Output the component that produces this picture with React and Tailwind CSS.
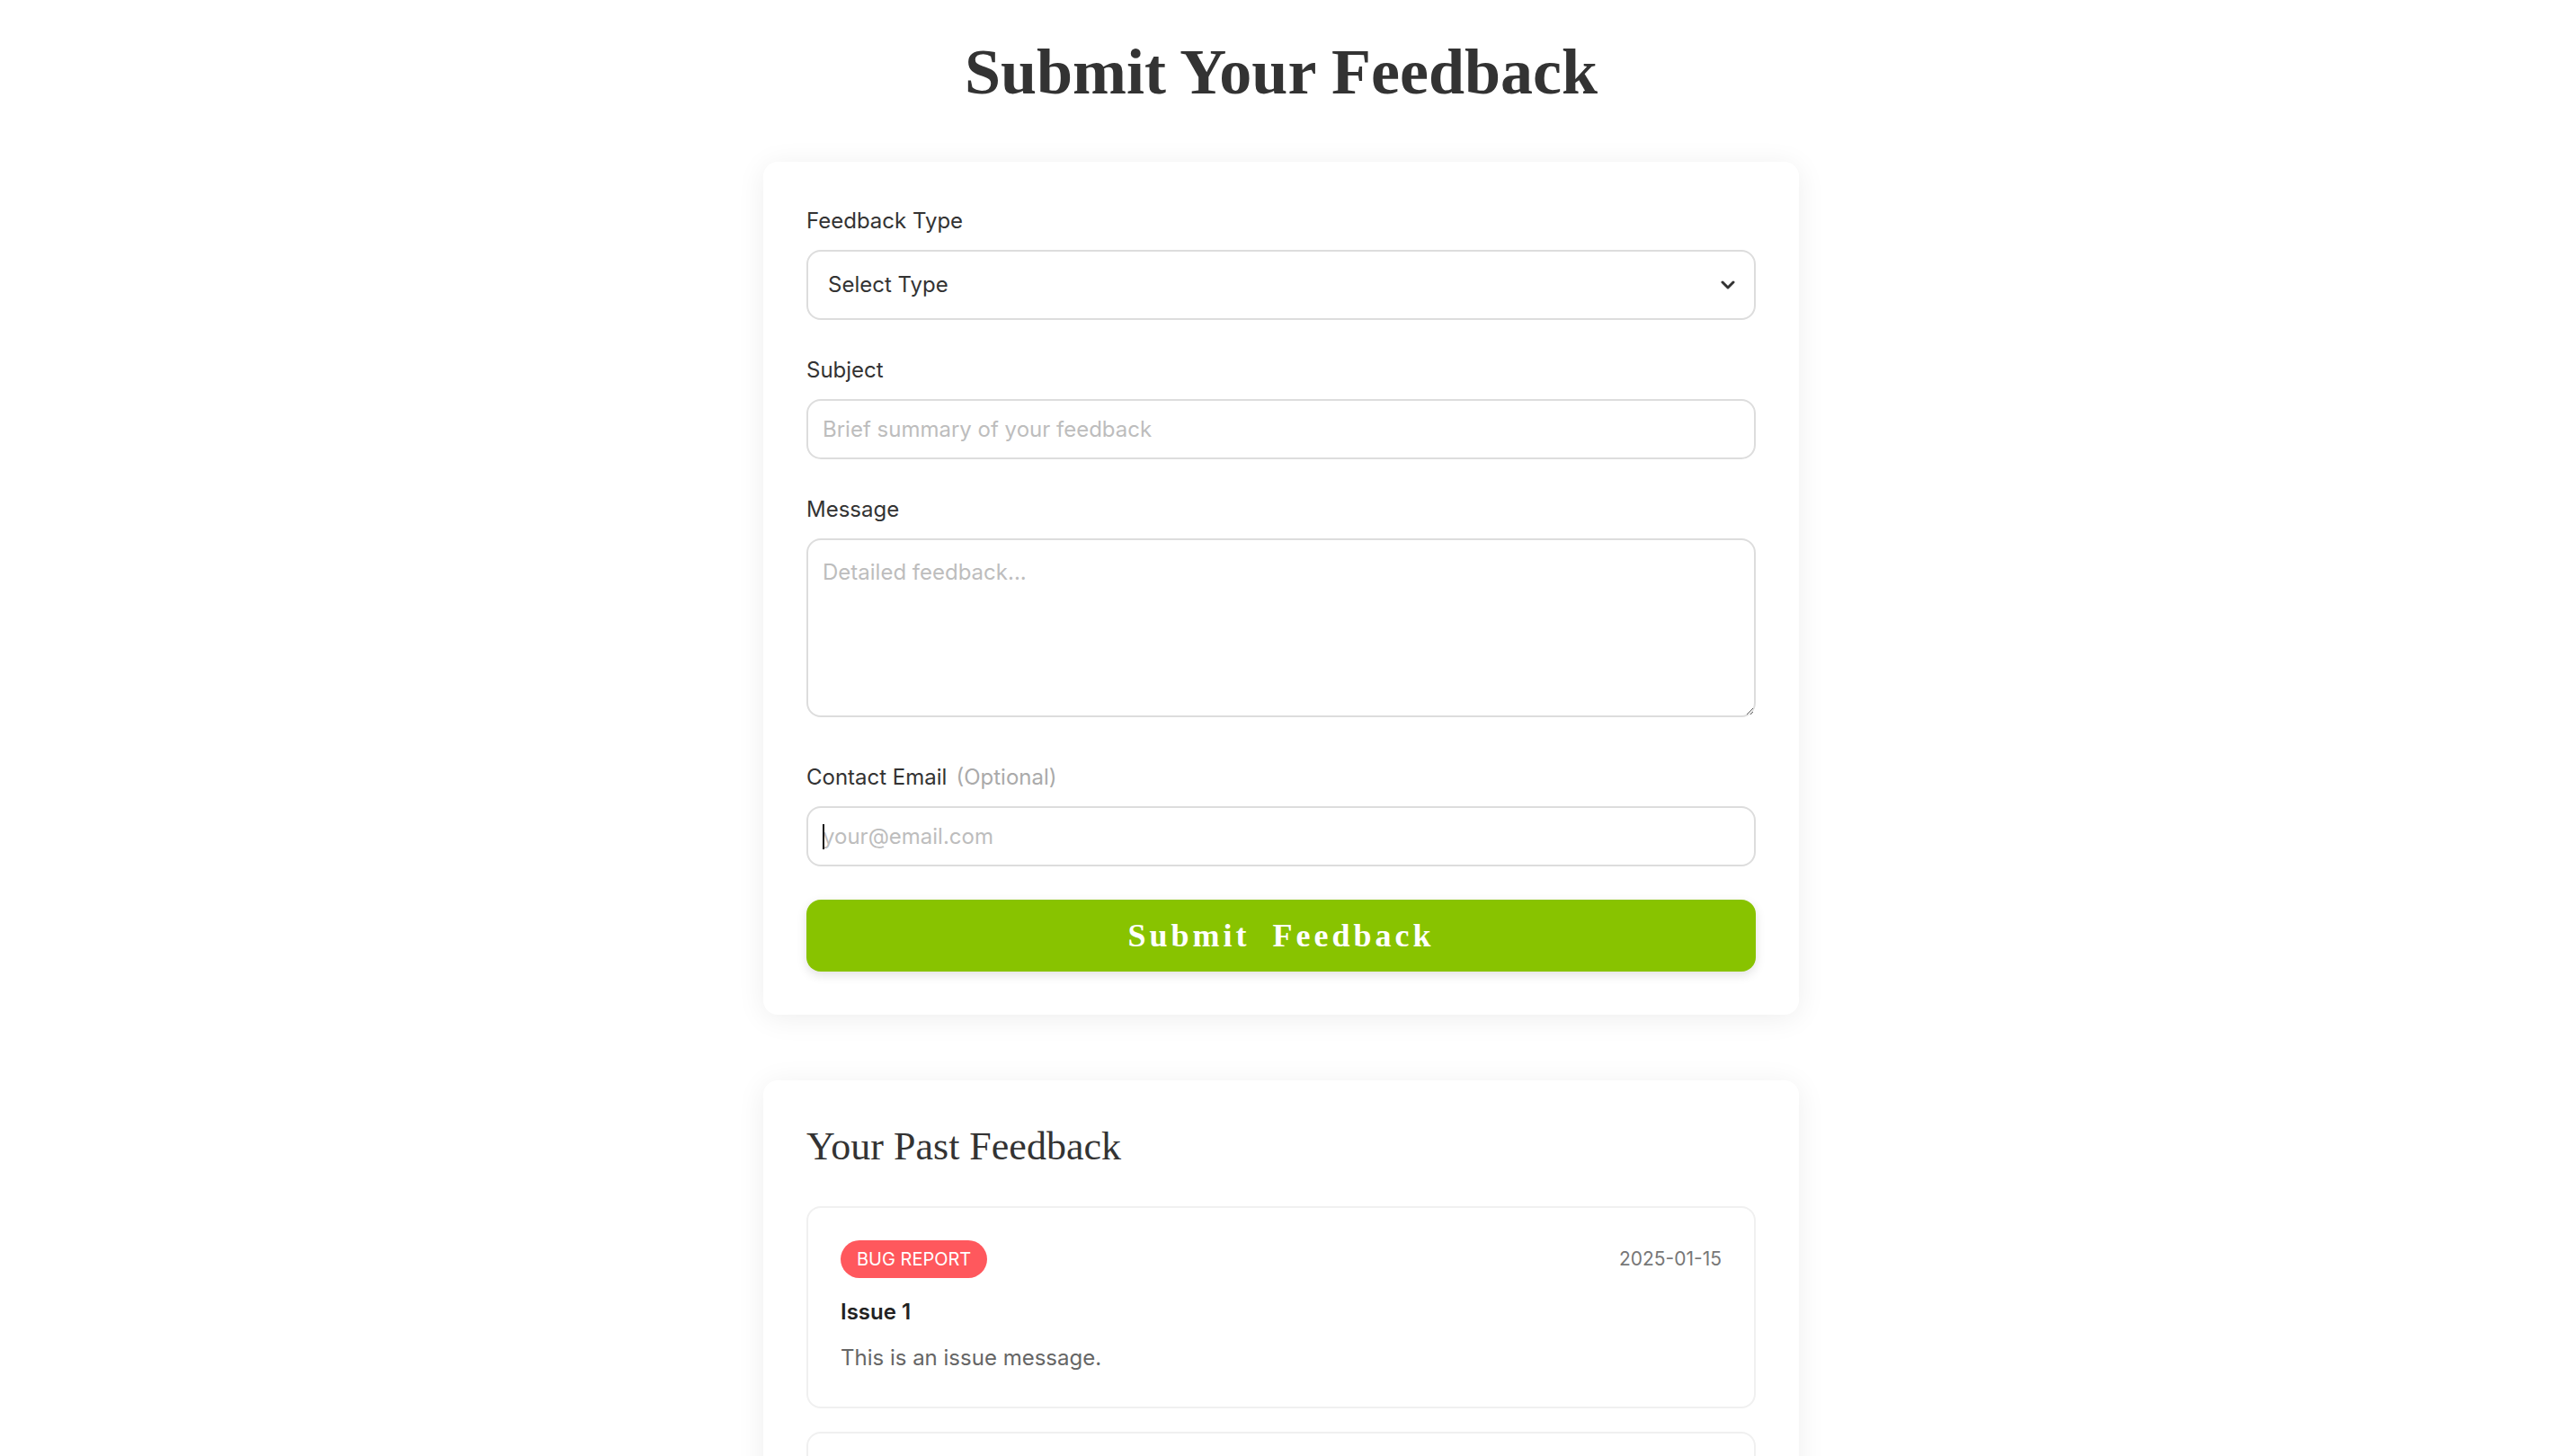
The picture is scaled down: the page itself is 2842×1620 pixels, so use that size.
import { useState } from "react";

const pastFeedback = [
  {
    id: 1,
    type: "Bug Report",
    date: "2025-01-15",
    subject: "Issue 1",
    message: "This is an issue message.",
  },
  {
    id: 2,
    type: "Suggestion",
    date: "2025-01-10",
    subject: "Idea 2",
    message: "This is a suggestion message.",
  },
];

function Field({ label, hint, children, className }) {
  return (
    <div className={className}>
      <label className="mb-[14px] block text-[24px] leading-[36px] text-[#333]">
        {label}
        {hint && <span className="ml-[10px] text-[#aaa]">{hint}</span>}
      </label>
      {children}
    </div>
  );
}

export default function App() {
  const [type, setType] = useState("");

  return (
    <div className="min-h-screen bg-white pl-2 font-['Inter',sans-serif] text-[#333]">
      <div className="mx-auto w-[1152px] pt-[37px] pb-24">
        <h1 className="mb-[57px] text-center font-['Liberation_Serif',serif] text-[72px] font-bold leading-[86px] text-[#333]">
          Submit Your Feedback
        </h1>

        {/* Form card */}
        <form
          className="rounded-2xl bg-white p-12 shadow-[0_4px_32px_rgba(0,0,0,0.07)]"
          onSubmit={(e) => e.preventDefault()}
        >
          <Field label="Feedback Type" className="mb-[38px]">
            <div className="relative">
              <select
                value={type}
                onChange={(e) => setType(e.target.value)}
                className="block h-[78px] w-full appearance-none rounded-2xl border-2 border-[#ddd] bg-white pl-[22px] text-[24px] text-[#333] outline-none"
              >
                <option value="">Select Type</option>
                <option value="bug">Bug Report</option>
                <option value="suggestion">Suggestion</option>
                <option value="other">Other</option>
              </select>
              <svg
                className="pointer-events-none absolute right-[23px] top-1/2 -translate-y-1/2"
                width="16"
                height="10"
                viewBox="0 0 16 10"
                fill="none"
              >
                <polyline
                  points="2,2 8,8 14,2"
                  stroke="#333"
                  strokeWidth="3"
                  strokeLinecap="round"
                  strokeLinejoin="round"
                />
              </svg>
            </div>
          </Field>

          <Field label="Subject" className="mb-[38px]">
            <input
              type="text"
              placeholder="Brief summary of your feedback"
              className="block h-[67px] w-full rounded-2xl border-2 border-[#ddd] px-4 text-[24px] text-[#333] outline-none placeholder:text-[#bdbdbd]"
            />
          </Field>

          <Field label="Message" className="mb-[49px]">
            <textarea
              placeholder="Detailed feedback..."
              className="block h-[199px] w-full rounded-2xl border-2 border-[#ddd] px-4 pt-[18px] text-[24px] text-[#333] outline-none placeholder:text-[#bdbdbd]"
            />
          </Field>

          <Field label="Contact Email" hint="(Optional)" className="mb-[37px]">
            <div className="relative">
              <input
                type="email"
                autoFocus
                placeholder="your@email.com"
                className="block h-[67px] w-full rounded-2xl border-2 border-[#ddd] px-4 text-[24px] text-[#333] outline-none placeholder:text-[#bdbdbd]"
              />
              {/* text caret */}
              <span className="pointer-events-none absolute left-[18px] top-1/2 h-[28px] w-[2px] -translate-y-1/2 bg-[#111]" />
            </div>
          </Field>

          <button
            type="submit"
            className="block h-20 w-full rounded-2xl bg-[#88c300] font-['Liberation_Serif',serif] text-[36px] font-bold tracking-[4px] text-white shadow-[0_4px_12px_rgba(0,0,0,0.12)] [word-spacing:12px]"
          >
            Submit Feedback
          </button>
        </form>

        {/* Past feedback */}
        <section className="mt-[73px] rounded-2xl bg-white p-12 shadow-[0_4px_32px_rgba(0,0,0,0.07)]">
          <h2 className="mb-10 font-['Liberation_Serif',serif] text-[44px] leading-[52px] text-[#333]">
            Your Past Feedback
          </h2>
          <div className="flex flex-col gap-[26px]">
            {pastFeedback.map((item) => (
              <div key={item.id} className="rounded-2xl border-2 border-[#f0f0f0] p-9">
                <div className="flex items-center justify-between">
                  <span className="flex h-[42px] items-center rounded-full bg-[#ff585d] px-[18px] text-[20px] uppercase text-white">
                    {item.type}
                  </span>
                  <span className="text-[21px] text-[#777]">{item.date}</span>
                </div>
                <h3 className="mt-5 text-[24px] font-semibold leading-[36px] text-[#222]">
                  {item.subject}
                </h3>
                <p className="mt-[15px] text-[24px] leading-[36px] text-[#666]">{item.message}</p>
              </div>
            ))}
          </div>
        </section>
      </div>
    </div>
  );
}
